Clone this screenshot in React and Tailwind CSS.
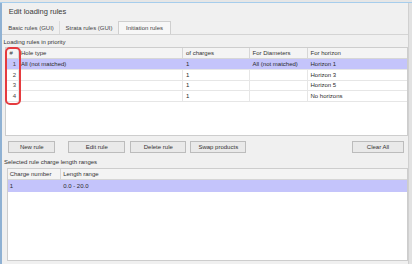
import React from "react";

const rows = [
  { n: "1", hole: "All (not matched)", ch: "1", dia: "All (not matched)", hor: "Horizon 1", sel: true },
  { n: "2", hole: "", ch: "1", dia: "", hor: "Horizon 3" },
  { n: "3", hole: "", ch: "1", dia: "", hor: "Horizon 5" },
  { n: "4", hole: "", ch: "1", dia: "", hor: "No horizons" },
];

function Btn({ children, w }) {
  return (
    <div
      className={`h-full ${w} flex items-center justify-center border border-[#bcbcbc] bg-[#e9e9e9] text-[#333]`}
    >
      {children}
    </div>
  );
}

export default function App() {
  return (
    <div
      className="relative w-[412px] h-[264px] bg-[#f0f0f0] flex flex-col overflow-hidden text-[6px] leading-none text-[#2a2a2a]"
      style={{ fontFamily: '"Liberation Sans", Arial, sans-serif' }}
    >
      {/* top frame */}
      <div className="h-[3px] shrink-0 bg-[#e6e6e6] border-b border-[#a6cdec]" />
      <div className="flex-1 flex min-h-0">
        {/* left frame */}
        <div className="w-[2px] shrink-0 bg-[#8fb1d3]" />
        {/* main */}
        <div className="w-[406px] shrink-0 flex flex-col">
          {/* title */}
          <div className="h-[17px] shrink-0 flex items-center pl-[6.7px] text-[7.5px] text-[#3a3a3a]">
            Edit loading rules
          </div>
          {/* tabs */}
          <div className="h-[14px] shrink-0 flex items-end pl-[1px] text-[#444]">
            <div className="w-[57px] h-[13px] flex items-center justify-center border-r border-[#dadada]">
              Basic rules (GUI)
            </div>
            <div className="w-[58px] h-[13px] flex items-center justify-center">
              Strata rules (GUI)
            </div>
            <div className="w-[53px] h-[13px] flex items-center justify-center bg-[#f7f7f7] border border-b-0 border-[#cfcfcf]">
              Initiation rules
            </div>
          </div>
          {/* panel */}
          <div className="flex-1 flex flex-col border-t border-[#d4d4d4] min-h-0">
            <div className="h-[12.3px] shrink-0 flex items-center pl-[1.5px] pt-[1px] text-[#333]">
              Loading rules in priority
            </div>
            {/* table 1 */}
            <div className="h-[88.7px] shrink-0 ml-[3px] bg-white border border-[#cdcdcd] flex flex-col">
              <div className="h-[11.2px] shrink-0 flex bg-[#f4f4f4] border-b border-[#d6d6d6] text-[#333]">
                <div className="w-[13px] shrink-0 border-r border-[#d6d6d6] flex items-center pl-[3.5px]">#</div>
                <div className="w-[164px] shrink-0 border-r border-[#d6d6d6] flex items-center pl-[2px]">Hole type</div>
                <div className="w-[67px] shrink-0 border-r border-[#d6d6d6] flex items-center pl-[3px]">of charges</div>
                <div className="w-[58px] shrink-0 border-r border-[#d6d6d6] flex items-center pl-[2.5px]">For Diameters</div>
                <div className="flex-1 flex items-center pl-[2.5px]">For horizon</div>
              </div>
              {rows.map((r) => (
                <div
                  key={r.n}
                  className={`h-[10.6px] shrink-0 flex border-b border-[#e6e6e6] ${r.sel ? "bg-[#c4c4fb]" : ""}`}
                >
                  <div className={`w-[13px] shrink-0 border-r ${r.sel ? "border-[#c4c4fb]" : "border-[#e6e6e6]"} flex items-center justify-end pr-[2px] text-[#444]`}>
                    {r.n}
                  </div>
                  <div className={`w-[164px] shrink-0 border-r ${r.sel ? "border-[#c4c4fb]" : "border-[#e6e6e6]"} flex items-center pl-[2px]`}>
                    {r.hole}
                  </div>
                  <div className={`w-[67px] shrink-0 border-r ${r.sel ? "border-[#c4c4fb]" : "border-[#e6e6e6]"} flex items-center pl-[3px]`}>
                    {r.ch}
                  </div>
                  <div className={`w-[58px] shrink-0 border-r ${r.sel ? "border-[#c4c4fb]" : "border-[#e6e6e6]"} flex items-center pl-[2.5px]`}>
                    {r.dia}
                  </div>
                  <div className="flex-1 flex items-center pl-[2.5px]">{r.hor}</div>
                </div>
              ))}
            </div>
            <div className="h-[4.7px] shrink-0" />
            {/* buttons */}
            <div className="h-[12.6px] shrink-0 flex pl-[6.3px] pr-[4px]">
              <Btn w="w-[47px]">New rule</Btn>
              <div className="w-[13px]" />
              <Btn w="w-[57px]">Edit rule</Btn>
              <div className="w-[5px]" />
              <Btn w="w-[56px]">Delete rule</Btn>
              <div className="w-[4px]" />
              <Btn w="w-[56px]">Swap products</Btn>
              <div className="flex-1" />
              <Btn w="w-[52px]">Clear All</Btn>
            </div>
            <div className="h-[15px] shrink-0 flex items-center pl-[2px] pt-[3px] text-[#333]">
              Selected rule charge length ranges
            </div>
            {/* table 2 */}
            <div className="h-[92.7px] shrink-0 ml-[4.7px] bg-white border border-[#cdcdcd] flex flex-col">
              <div className="h-[11px] shrink-0 flex bg-[#f4f4f4] border-b border-[#d6d6d6] text-[#333]">
                <div className="w-[53px] shrink-0 border-r border-[#d6d6d6] flex items-center pl-[2px]">Charge number</div>
                <div className="flex-1 flex items-center pl-[2.5px]">Length range</div>
              </div>
              <div className="h-[12.2px] shrink-0 flex bg-[#c4c4fb]">
                <div className="w-[53px] shrink-0 flex items-center pl-[2px]">1</div>
                <div className="flex-1 flex items-center pl-[2.5px]">0.0 - 20.0</div>
              </div>
            </div>
          </div>
        </div>
        {/* right frame */}
        <div className="flex-1 flex">
          <div className="w-[1px] bg-[#d0d0d0]" />
          <div className="flex-1 bg-[#e2e2e2]" />
        </div>
      </div>
      {/* annotation highlight */}
      <div className="absolute left-[5px] top-[46.5px] w-[16px] h-[58px] rounded-[5px] border-2 border-[#e53b3f]" />
    </div>
  );
}
